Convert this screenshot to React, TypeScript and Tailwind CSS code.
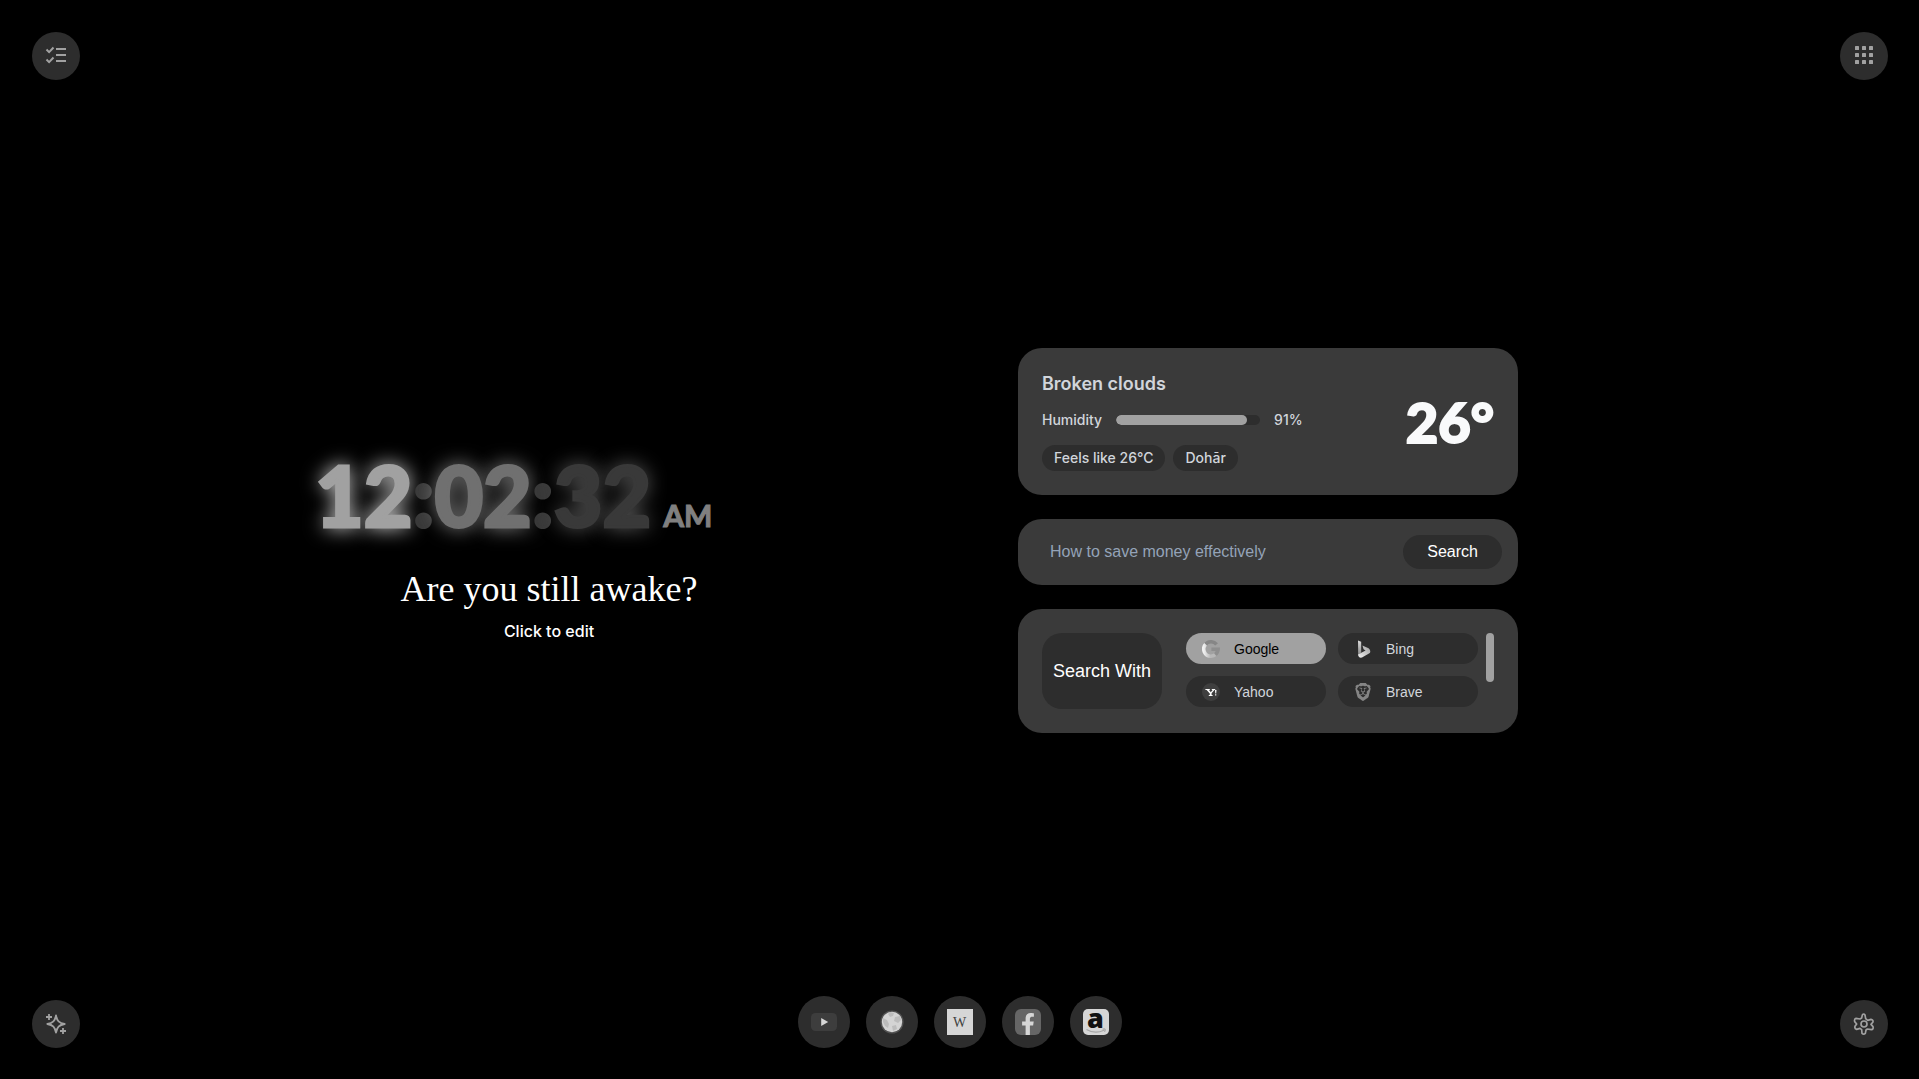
import type { ReactNode } from "react";
import { FaFacebookF } from "react-icons/fa";
import { SiBrave } from "react-icons/si";

const corner =
  "flex size-12 items-center justify-center rounded-full bg-[#2d2d2d] text-[#a1a1a1]";

function ChecklistIcon() {
  return (
    <svg className="mb-0.5 size-6" viewBox="0 0 24 24" fill="none" stroke="currentColor" strokeWidth="2">
      <path d="M12 6h10M12 12h10M12 18h10" />
      <path d="m2.5 6.5 2.6 2.6 4.4-4.6M2.5 16.5l2.6 2.6 4.4-4.6" />
    </svg>
  );
}

function AppsIcon() {
  const steps = [3, 10, 17];
  return (
    <svg className="mb-0.5 size-6" viewBox="0 0 24 24" fill="currentColor">
      {steps.map((y) => steps.map((x) => <rect key={`${x}-${y}`} x={x} y={y} width="4" height="4" rx="0.6" />))}
    </svg>
  );
}

function SparkleIcon() {
  return (
    <svg className="size-6" viewBox="72 66 72 72" fill="none" stroke="currentColor" strokeWidth="5.5" strokeLinejoin="round">
      <path d="M108 76C111 93 117 99 134 102C117 105 111 111 108 128C105 111 99 105 82 102C99 99 105 93 108 76Z" />
      <path d="M87 72v18M78 81h18M129 114v18M120 123h18" />
    </svg>
  );
}

function GearIcon() {
  return (
    <svg className="size-6" viewBox="66 66 72 72" fill="none" stroke="currentColor" strokeWidth="5" strokeLinejoin="round">
      <path d="M97 75Q101 69 105 75L107 86L113 91L123 88Q130 89 129 96L123 103L129 110Q131 118 124 119L112 117L108 120L106 130Q101 135 96 130L95 119L90 115L80 118Q73 116 75 109L80 102L74 95Q72 87 78 85L90 87L95 84Z" />
      <circle cx="102" cy="102" r="9" />
    </svg>
  );
}

function GoogleIcon() {
  return (
    <svg className="size-[18px]" viewBox="0 0 18 18" fill="none" strokeWidth="3.6">
      <defs>
        <linearGradient id="g-left" x1="0" y1="0" x2="1" y2="0">
          <stop offset="0" stopColor="#f0f0f0" />
          <stop offset="1" stopColor="#b4b4b4" />
        </linearGradient>
      </defs>
      <path d="M14.6 4.4A7.2 7.2 0 0 0 3.2 4.8" stroke="#868686" />
      <path d="M3.6 4.2A7.2 7.2 0 0 0 9 16.2" stroke="url(#g-left)" />
      <path d="M9 16.2A7.2 7.2 0 0 0 13.8 14.2" stroke="#b8b8b8" />
      <path d="M13.2 14.6A7.2 7.2 0 0 0 16.1 9.2H9.4" stroke="#8e8e8e" />
    </svg>
  );
}

function BingIcon() {
  return (
    <svg className="size-[18px]" viewBox="0 0 18 18">
      <defs>
        <linearGradient id="b-stem" x1="0" y1="0" x2="0" y2="1">
          <stop offset="0" stopColor="#dcdcdc" />
          <stop offset="1" stopColor="#8a8a8a" />
        </linearGradient>
        <linearGradient id="b-bowl" x1="0" y1="1" x2="1" y2="0">
          <stop offset="0" stopColor="#f0f0f0" />
          <stop offset="1" stopColor="#a0a0a0" />
        </linearGradient>
      </defs>
      <path d="M4 0.4 7.2 1.8v10.6L4.2 15z" fill="url(#b-stem)" />
      <path d="M4 14.6 11.6 10.4 9.6 9.2 8.4 5.4 14.6 8.2q2.6 2 1.2 4.8L8 17.6Q4.4 18.4 4 14.6z" fill="url(#b-bowl)" />
    </svg>
  );
}

function YahooIcon() {
  return (
    <svg className="size-[18px]" viewBox="0 0 18 18">
      <circle cx="9" cy="9" r="9" fill="#3f3f3f" />
      <path d="M3.4 6h4.4v1H7l1.8 2.2L10.6 7H9.8V6h3.4v1h-.8L9.6 10.2V12h1v1H6.8v-1h1v-1.6L4.6 7H3.4z" fill="#fff" />
      <path d="M13 7h1.5l-.3 3.4h-.9zM13.1 11.2h1.2v1.3h-1.2z" fill="#fff" />
    </svg>
  );
}

const engines: { name: string; icon: ReactNode; active?: boolean }[] = [
  { name: "Google", icon: <GoogleIcon />, active: true },
  { name: "Bing", icon: <BingIcon /> },
  { name: "Yahoo", icon: <YahooIcon /> },
  { name: "Brave", icon: <SiBrave className="size-[18px] text-[#858585]" /> },
];

const shortcuts: { name: string; icon: ReactNode }[] = [
  {
    name: "YouTube",
    icon: (
      <svg className="size-[26px]" viewBox="0 0 26 26">
        <rect y="4" width="26" height="18" rx="4.5" fill="#3d3d3d" />
        <path d="M10.2 9v8l7-4z" fill="#d6d6d6" />
      </svg>
    ),
  },
  {
    name: "World",
    icon: (
      <svg className="size-[26px]" viewBox="0 0 26 26">
        <circle cx="13" cy="13" r="11.6" fill="#6a6a6a" opacity="0.6" />
        <circle cx="13" cy="13" r="10.2" fill="#d4d4d4" />
        <path d="M4 9l4 2 2 4-1 4-3-2-2-4zM11 3l4 1-1 3-3 1-2-3zM16 8l5-1 1 4-3 3-4-2zM13 17l4-1 1 4-4 2z" fill="#bcbcbc" />
      </svg>
    ),
  },
  {
    name: "Wikipedia",
    icon: (
      <span className="flex size-[26px] items-center justify-center bg-[#d6d6d6] pt-0.5 font-['Liberation_Serif',serif] text-sm leading-none text-[#404040]">
        W
      </span>
    ),
  },
  {
    name: "Facebook",
    icon: (
      <span className="flex size-[26px] items-end justify-center overflow-hidden rounded-md bg-[#666666] text-[#d6d6d6]">
        <FaFacebookF className="size-[22px]" />
      </span>
    ),
  },
  {
    name: "Amazon",
    icon: (
      <span className="relative flex size-[26px] justify-center rounded-[5px] bg-[#d6d6d6] font-['Open_Sans',sans-serif] text-[27px] leading-[17px] font-extrabold text-[#111]">
        a
        <svg className="absolute inset-0 size-[26px]" viewBox="0 0 26 26" fill="none" stroke="#a6a6a6" strokeWidth="1.2">
          <path d="M3.5 20.5Q12 25.5 21 21.2M19.5 20.2q4-1.2 2 2.6" />
        </svg>
      </span>
    ),
  },
];

export default function App() {
  return (
    <div className="relative grid min-h-screen grid-cols-[1018fr_901fr] items-center overflow-hidden bg-black pt-0.5 font-['Inter',sans-serif]">
      <button aria-label="Tasks" className={`${corner} absolute top-8 left-8`}>
        <ChecklistIcon />
      </button>
      <button aria-label="Apps" className={`${corner} absolute top-8 right-[31px]`}>
        <AppsIcon />
      </button>
      <button aria-label="AI tools" className={`${corner} absolute bottom-[31px] left-8`}>
        <SparkleIcon />
      </button>
      <button aria-label="Settings" className={`${corner} absolute right-[31px] bottom-[31px]`}>
        <GearIcon />
      </button>

      <section className="flex justify-center pt-1 pl-20">
        <div className="w-[468px]">
          <div className="flex items-baseline font-['Lato',sans-serif] text-[84px] leading-[100px] font-black [-webkit-text-stroke:3px_currentColor]">
            <span className="text-[#a1a1a1] [text-shadow:0_0_20px_#ffffff]">12</span>
            <span className="text-[#393939]">:</span>
            <span className="text-[#707070] [text-shadow:0_0_20px_#a1a1a1]">02</span>
            <span className="text-[#393939]">:</span>
            <span className="text-[#393939] [text-shadow:0_0_20px_#707070]">32</span>
            <span className="ml-3 text-[30px] leading-none font-bold text-[#808080] [-webkit-text-stroke:1px_currentColor]">AM</span>
          </div>
          <h1 className="mt-4 text-center font-['Liberation_Serif',serif] text-4xl leading-[56px] text-white">
            Are you still awake?
          </h1>
          <p className="mt-1 text-center text-base leading-5 font-medium text-white">Click to edit</p>
        </div>
      </section>

      <main className="flex w-[500px] flex-col gap-6">
        <section className="flex items-center justify-between rounded-3xl bg-[#3a3a3a] p-6 text-sm text-[#d1d5db]">
          <div>
            <h2 className="text-lg leading-6 font-semibold">Broken clouds</h2>
            <div className="mt-3.5 flex items-center gap-3.5 leading-5 font-medium">
              <span>Humidity</span>
              <span className="h-2.5 w-36 overflow-hidden rounded-full bg-[#2d2d2d]">
                <span className="block h-full w-[91%] rounded-full bg-[#a1a1a1]" />
              </span>
              <span>91%</span>
            </div>
            <div className="mt-[15px] flex gap-2 leading-[26px] font-medium">
              <span className="rounded-full bg-[#2d2d2d] px-3">Feels like 26°C</span>
              <span className="rounded-full bg-[#2d2d2d] px-3">Dohār</span>
            </div>
          </div>
          <div className="font-['Lato',sans-serif] text-[56px] leading-[60px] font-black text-[#f9fafb] [-webkit-text-stroke:2px_currentColor]">
            26°
          </div>
        </section>

        <form className="flex items-center rounded-3xl bg-[#3a3a3a] p-4 font-['Liberation_Sans',sans-serif]">
          <input
            aria-label="Search query"
            placeholder="How to save money effectively"
            className="min-w-0 flex-1 bg-transparent px-4 text-base text-white outline-none placeholder:text-[#94a3b8]"
          />
          <button type="button" className="h-[34px] rounded-full bg-[#2d2d2d] px-6 text-base text-white">
            Search
          </button>
        </form>

        <section className="flex gap-6 rounded-3xl bg-[#3a3a3a] p-6 font-['Liberation_Sans',sans-serif]">
          <div className="flex h-[76px] w-[120px] shrink-0 items-center justify-center rounded-[20px] bg-[#2d2d2d] text-lg whitespace-nowrap text-white">
            Search With
          </div>
          <div className="flex flex-1 gap-2">
            <div className="grid flex-1 grid-cols-2 content-start gap-3">
              {engines.map((e) => (
                <button
                  key={e.name}
                  className={`flex h-[31px] items-center gap-3.5 rounded-full px-4 text-sm ${
                    e.active ? "bg-[#a1a1a1] text-black" : "bg-[#2d2d2d] text-[#d1d5db]"
                  }`}
                >
                  {e.icon}
                  {e.name}
                </button>
              ))}
            </div>
            <div className="h-[49px] w-2 rounded-full bg-[#a1a1a1]" />
          </div>
        </section>
      </main>

      <nav aria-label="Shortcuts" className="absolute inset-x-0 bottom-[31px] mx-auto flex w-fit gap-4">
        {shortcuts.map((s) => (
          <a key={s.name} href="#" aria-label={s.name} className="flex size-[52px] items-center justify-center rounded-full bg-[#2d2d2d]">
            {s.icon}
          </a>
        ))}
      </nav>
    </div>
  );
}
